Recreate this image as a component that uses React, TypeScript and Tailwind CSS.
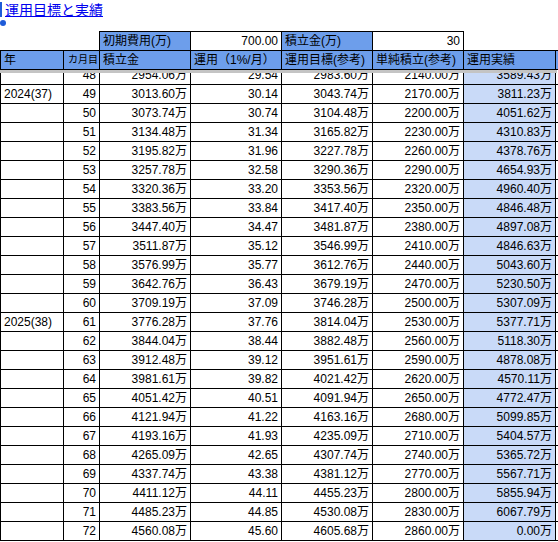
const rows = [
  { m: 48, y: "", a: "2954.06万", b: "29.54", c: "2983.60万", d: "2140.00万", e: "3589.43万" },
  { m: 49, y: "2024(37)", a: "3013.60万", b: "30.14", c: "3043.74万", d: "2170.00万", e: "3811.23万" },
  { m: 50, y: "", a: "3073.74万", b: "30.74", c: "3104.48万", d: "2200.00万", e: "4051.62万" },
  { m: 51, y: "", a: "3134.48万", b: "31.34", c: "3165.82万", d: "2230.00万", e: "4310.83万" },
  { m: 52, y: "", a: "3195.82万", b: "31.96", c: "3227.78万", d: "2260.00万", e: "4378.76万" },
  { m: 53, y: "", a: "3257.78万", b: "32.58", c: "3290.36万", d: "2290.00万", e: "4654.93万" },
  { m: 54, y: "", a: "3320.36万", b: "33.20", c: "3353.56万", d: "2320.00万", e: "4960.40万" },
  { m: 55, y: "", a: "3383.56万", b: "33.84", c: "3417.40万", d: "2350.00万", e: "4846.48万" },
  { m: 56, y: "", a: "3447.40万", b: "34.47", c: "3481.87万", d: "2380.00万", e: "4897.08万" },
  { m: 57, y: "", a: "3511.87万", b: "35.12", c: "3546.99万", d: "2410.00万", e: "4846.63万" },
  { m: 58, y: "", a: "3576.99万", b: "35.77", c: "3612.76万", d: "2440.00万", e: "5043.60万" },
  { m: 59, y: "", a: "3642.76万", b: "36.43", c: "3679.19万", d: "2470.00万", e: "5230.50万" },
  { m: 60, y: "", a: "3709.19万", b: "37.09", c: "3746.28万", d: "2500.00万", e: "5307.09万" },
  { m: 61, y: "2025(38)", a: "3776.28万", b: "37.76", c: "3814.04万", d: "2530.00万", e: "5377.71万" },
  { m: 62, y: "", a: "3844.04万", b: "38.44", c: "3882.48万", d: "2560.00万", e: "5118.30万" },
  { m: 63, y: "", a: "3912.48万", b: "39.12", c: "3951.61万", d: "2590.00万", e: "4878.08万" },
  { m: 64, y: "", a: "3981.61万", b: "39.82", c: "4021.42万", d: "2620.00万", e: "4570.11万" },
  { m: 65, y: "", a: "4051.42万", b: "40.51", c: "4091.94万", d: "2650.00万", e: "4772.47万" },
  { m: 66, y: "", a: "4121.94万", b: "41.22", c: "4163.16万", d: "2680.00万", e: "5099.85万" },
  { m: 67, y: "", a: "4193.16万", b: "41.93", c: "4235.09万", d: "2710.00万", e: "5404.57万" },
  { m: 68, y: "", a: "4265.09万", b: "42.65", c: "4307.74万", d: "2740.00万", e: "5365.72万" },
  { m: 69, y: "", a: "4337.74万", b: "43.38", c: "4381.12万", d: "2770.00万", e: "5567.71万" },
  { m: 70, y: "", a: "4411.12万", b: "44.11", c: "4455.23万", d: "2800.00万", e: "5855.94万" },
  { m: 71, y: "", a: "4485.23万", b: "44.85", c: "4530.08万", d: "2830.00万", e: "6067.79万" },
  { m: 72, y: "", a: "4560.08万", b: "45.60", c: "4605.68万", d: "2860.00万", e: "0.00万" },
];

const grid = "grid grid-cols-[64px_36px_91px_91px_91px_91px_92px]";
const cell = "border-r border-black px-[3px] whitespace-nowrap overflow-hidden";

export default function App() {
  return (
    <div
      className="relative w-[558px] bg-white text-black text-[12px] leading-[18px]"
      style={{ fontFamily: '"Liberation Sans", "Noto Sans CJK JP", sans-serif' }}
    >
      {/* selection marker */}
      <span className="absolute left-0 top-[2px] h-[15px] w-[2px] bg-[#1e5bd8]" />
      <span className="absolute left-0 top-[20px] h-[6px] w-[6px] rounded-full bg-[#1e5bd8]" />

      {/* TITLE */}
      <div className="h-[31px] pl-[5px]">
        <a href="#" className="text-[14px] leading-[20px] text-[#0000ee] underline">
          運用目標と実績
        </a>
      </div>

      {/* HEADER ROW 1 */}
      <div className={`${grid} h-[19px]`}>
        <div />
        <div className="border-r border-black" />
        <div className={`${cell} border-t bg-[#6d9eeb]`}>初期費用(万)</div>
        <div className={`${cell} border-t text-right`}>700.00</div>
        <div className={`${cell} border-t bg-[#6d9eeb]`}>積立金(万)</div>
        <div className={`${cell} border-t text-right`}>30</div>
        <div />
      </div>

      {/* HEADER ROW 2 */}
      <div className={`${grid} h-[20px] bg-[#6d9eeb] border-t border-b border-black`}>
        <div className={`${cell} border-l`}>年</div>
        <div className="border-r border-black whitespace-nowrap text-right text-[10px] pr-[1px]">カ月目</div>
        <div className={cell}>積立金</div>
        <div className={cell}>運用（1%/月）</div>
        <div className={cell}>運用目標(参考)</div>
        <div className={cell}>単純積立(参考)</div>
        <div className={cell}>運用実績</div>
      </div>

      <div className="h-[3px] w-[557px] bg-[#c4c4c4]" />

      {/* BODY */}
      <div className="overflow-hidden">
        <div className="-mt-[7px]">
          {rows.map((r) => (
            <div key={r.m} className={`${grid} h-[19px] border-b border-black`}>
              <div className={`${cell} border-l`}>{r.y}</div>
              <div className={`${cell} text-right`}>{r.m}</div>
              <div className={`${cell} text-right`}>{r.a}</div>
              <div className={`${cell} text-right`}>{r.b}</div>
              <div className={`${cell} text-right`}>{r.c}</div>
              <div className={`${cell} text-right`}>{r.d}</div>
              <div className={`${cell} text-right bg-[#c9daf8]`}>{r.e}</div>
            </div>
          ))}
        </div>
      </div>
    </div>
  );
}
